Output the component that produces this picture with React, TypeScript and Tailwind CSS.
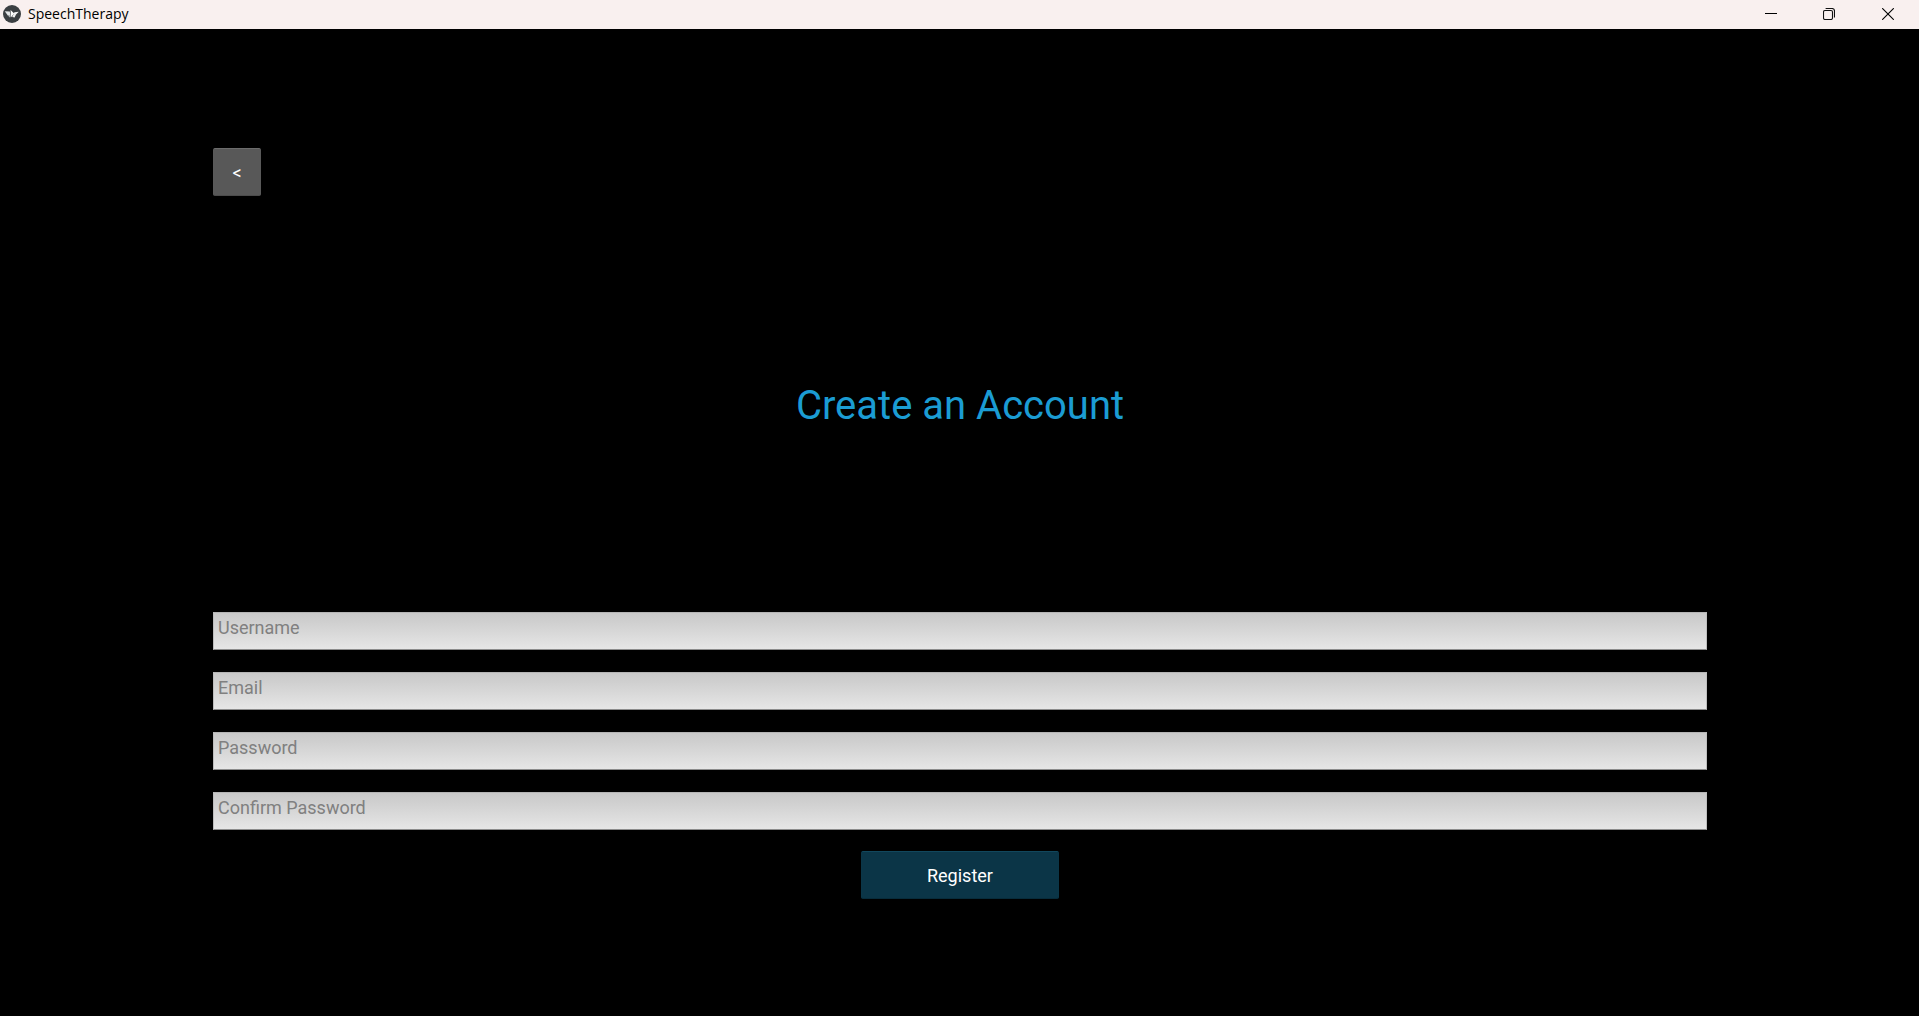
const fields = [
  { id: 'username', label: 'Username', type: 'text' },
  { id: 'email', label: 'Email', type: 'email' },
  { id: 'password', label: 'Password', type: 'password' },
  { id: 'confirm-password', label: 'Confirm Password', type: 'password' },
];

function AppLogo() {
  return (
    <svg viewBox="0 0 18 18" className="size-[18px]" aria-hidden="true">
      <circle cx="9" cy="9" r="9" fill="#3b3f42" />
      <path d="M1.8 6.2 6.8 6.6 7.4 11 4.6 10.2Z" fill="#e4e6e7" />
      <path d="M4.4 10 7.6 11 6.8 12.6Z" fill="#b4b7b9" />
      <path d="M7.6 5 11.2 8.4 7.8 12.6Z" fill="#fff" />
      <path d="M11.4 7.2 15.8 6.8 13 9.4 11.6 12.4 9.2 12Z" fill="#f1f2f2" />
    </svg>
  );
}

function TitleBar() {
  return (
    <header className="flex h-[29px] items-center justify-between bg-[#f9f0ef] pb-px pl-[3px] text-black">
      <div className="flex items-center gap-[7px]">
        <AppLogo />
        <span className="font-['Open_Sans',sans-serif] text-sm">SpeechTherapy</span>
      </div>
      <div className="flex h-full">
        <button type="button" aria-label="Minimize" className="flex w-[60px] items-center justify-center">
          <svg viewBox="0 0 12 12" className="size-3" aria-hidden="true">
            <path d="M0 5.5H12" stroke="#000" />
          </svg>
        </button>
        <button type="button" aria-label="Restore" className="flex w-14 items-center justify-center">
          <svg viewBox="0 0 12 12" className="size-3" fill="none" stroke="#111" strokeWidth="1.1" aria-hidden="true">
            <rect x="0.5" y="2.5" width="9" height="9" rx="1.5" />
            <path d="M2.6 0.5H9A2.5 2.5 0 0 1 11.5 3V9.4" />
          </svg>
        </button>
        <button type="button" aria-label="Close" className="flex w-[62px] items-center justify-center">
          <svg viewBox="0 0 12 12" className="size-3" aria-hidden="true">
            <path d="M0.2 0.2 11.8 11.8M11.8 0.2 0.2 11.8" stroke="#000" strokeWidth="1.1" />
          </svg>
        </button>
      </div>
    </header>
  );
}

export default function App() {
  return (
    <div className="flex min-h-screen flex-col bg-black font-[Roboto,sans-serif]">
      <TitleBar />
      <main className="pt-[119px] pr-[11.05%] pl-[11.1%]">
        <button
          type="button"
          aria-label="Back"
          className="flex size-12 items-center justify-center rounded-xs border border-t-[#6c6c6c] border-x-[#595959] border-b-[#4c4c4c] bg-[#585858] pt-[2px] text-lg text-white"
        >
          &lt;
        </button>
        <h1 className="mt-[186px] text-center text-[40px] leading-12 text-[#1b9cd3]">Create an Account</h1>
        <form className="mt-[182px] flex flex-col" onSubmit={(e) => e.preventDefault()}>
          <div className="flex flex-col gap-[22px]">
            {fields.map((f) => (
              <input
                key={f.id}
                id={f.id}
                type={f.type}
                aria-label={f.label}
                placeholder={f.label}
                className="h-[38px] w-full border border-t-[#b5b5b5] border-x-[#bdbdbd] border-b-[#8c8c8c] bg-linear-to-b from-[#c8c8c8] to-[#e6e6e6] pb-[7px] pl-1 text-lg leading-6 text-black outline-none placeholder:text-[#808080]"
              />
            ))}
          </div>
          <button
            type="submit"
            className="mt-[21px] h-12 w-[198px] self-center rounded-xs border border-t-[#11475d] border-x-[#0b3648] border-b-[#082c3b] bg-[#0b3547] pt-[2px] text-lg text-white"
          >
            Register
          </button>
        </form>
      </main>
    </div>
  );
}
